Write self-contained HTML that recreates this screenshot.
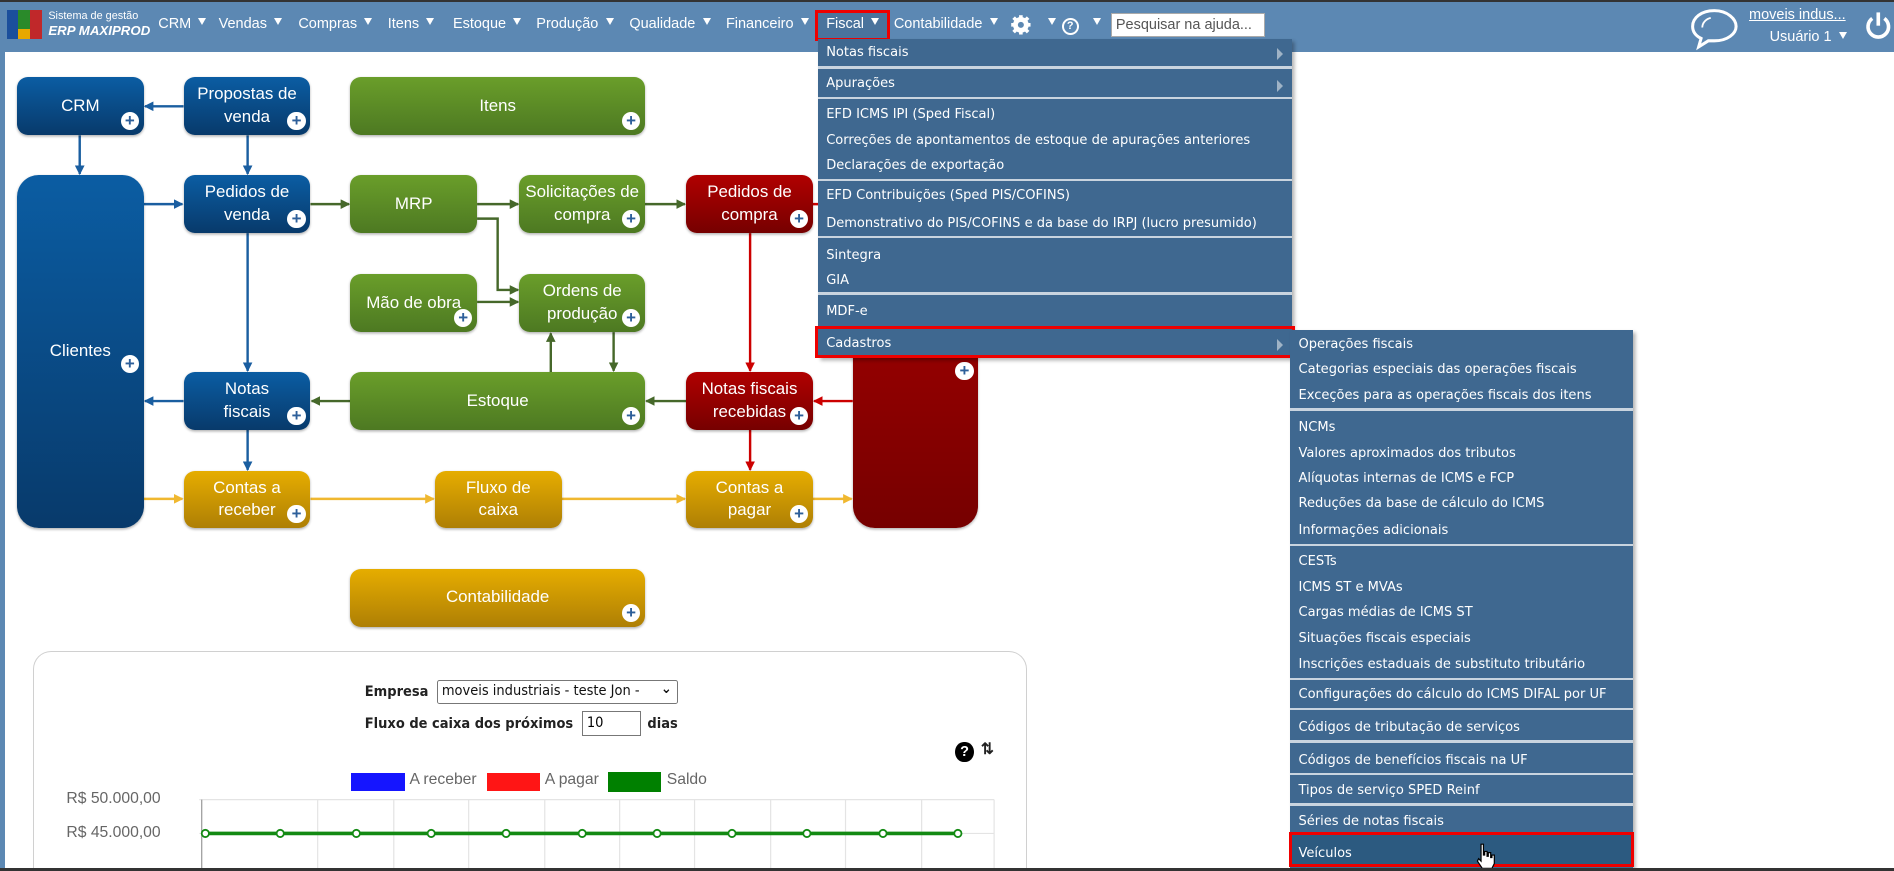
<!DOCTYPE html>
<html><head><meta charset="utf-8">
<style>
html{zoom:1.2079}
*{box-sizing:border-box}
body{margin:0;width:1568px;height:721px;overflow:hidden;background:#fff;font-family:"Liberation Sans",Arial,sans-serif;position:relative}
.abs{position:absolute}
#nav{left:0;top:0;width:1568px;height:43px;background:#5c88b3;border-top:2px solid #333}
#lstrip{left:0;top:43px;width:4px;height:678px;background:#5c88b3}
.ni{position:absolute;top:13px;color:#fff;font-size:12px;white-space:nowrap}
.tri{display:inline-block;width:0;height:0;border-left:4px solid transparent;border-right:4px solid transparent;border-top:6px solid #fff;margin-left:6px;vertical-align:2px}
.menu{position:absolute;background:#3f6890;box-shadow:2px 2px 3px rgba(0,0,0,.3);font-family:"DejaVu Sans",Verdana,sans-serif;font-size:10.8px;color:#fff}
.mi{position:absolute;left:7px;white-space:nowrap;margin-top:2px}
.sep{position:absolute;left:0;right:0;height:2px;background:#c9d4df}
.arr{position:absolute;right:8px;width:0;height:0;border-top:5px solid transparent;border-bottom:5px solid transparent;border-left:5px solid #9fb3c6;margin-top:2px}
.box{position:absolute;border-radius:9px;color:#fff;font-size:14px;text-align:center;display:flex;align-items:center;justify-content:center;line-height:19px;box-shadow:0 1px 2px rgba(0,0,0,.3)}
.b{background:linear-gradient(#0b5da3,#083a6b)}
.g{background:linear-gradient(#6a9e2a,#4d7922)}
.r{background:linear-gradient(#b10000,#760000)}
.y{background:linear-gradient(#e6ad00,#ae7f05)}
.pl{position:absolute;right:4px;bottom:4px;width:15px;height:15px;border-radius:50%;background:#fff;color:#2d5f9a;font-size:14px;line-height:15px;text-align:center;font-weight:bold}
.lbl{position:absolute;font-size:12px;color:#222;font-weight:bold;font-family:"DejaVu Sans Condensed","DejaVu Sans",sans-serif}
</style></head><body>
<div id="nav" class="abs"></div>
<div id="lstrip" class="abs"></div>
<div class="abs" style="left:6px;top:8px;width:9px;height:24px;background:#1b4f9c"></div>
<div class="abs" style="left:15px;top:8px;width:10px;height:16px;background:#2a8a2a"></div>
<div class="abs" style="left:15px;top:24px;width:10px;height:8px;background:#e8a800"></div>
<div class="abs" style="left:25px;top:8px;width:10px;height:24px;background:#c0282a"></div>
<div class="abs" style="left:40px;top:8px;color:#fff;font-size:9px">Sistema de gestão</div>
<div class="abs" style="left:40px;top:19px;color:#fff;font-size:11px;font-weight:bold;font-style:italic">ERP MAXIPROD</div>
<div class="ni" style="left:131px">CRM<span class="tri"></span></div>
<div class="ni" style="left:181px">Vendas<span class="tri"></span></div>
<div class="ni" style="left:247px">Compras<span class="tri"></span></div>
<div class="ni" style="left:321px">Itens<span class="tri"></span></div>
<div class="ni" style="left:375px">Estoque<span class="tri"></span></div>
<div class="ni" style="left:444px">Produção<span class="tri"></span></div>
<div class="ni" style="left:521px">Qualidade<span class="tri"></span></div>
<div class="ni" style="left:601px">Financeiro<span class="tri"></span></div>
<div class="abs" style="left:675px;top:8px;width:62px;height:26px;border:3px solid #e00;background:#4a739c"></div>
<div class="ni" style="left:684px">Fiscal<span class="tri"></span></div>
<div class="ni" style="left:740px">Contabilidade<span class="tri"></span></div>
<svg class="abs" style="left:836px;top:12px" width="18" height="18" viewBox="0 0 18 18"><circle cx="9" cy="9" r="5" fill="none" stroke="#fff" stroke-width="3"/><g stroke="#fff" stroke-width="3"><line x1="9" y1="1" x2="9" y2="17"/><line x1="1" y1="9" x2="17" y2="9"/><line x1="3" y1="3" x2="15" y2="15"/><line x1="15" y1="3" x2="3" y2="15"/></g><circle cx="9" cy="9" r="2.5" fill="#5c88b3"/></svg>
<div class="ni" style="left:862px;top:13px"><span class="tri"></span></div>
<div class="abs" style="left:879px;top:15px;width:14px;height:14px;border:2px solid #fff;border-radius:50%;color:#fff;font-size:9px;text-align:center;line-height:10px;font-weight:bold">?</div>
<div class="ni" style="left:899px;top:13px"><span class="tri"></span></div>
<div class="abs" style="left:920px;top:11px;width:127px;height:20px;background:#fff;border:1px solid #aaa;font-size:12px;color:#555;padding:2px 3px;white-space:nowrap;overflow:hidden">Pesquisar na ajuda...</div>
<svg class="abs" style="left:1398px;top:6px" width="42" height="36" viewBox="0 0 42 36"><path d="M21 3C10 3 3 9 3 16c0 5 3 8 7 10l-2 7 8-5c2 0 3 0 5 0 11 0 18-6 18-12S32 3 21 3z" fill="none" stroke="#fff" stroke-width="2.5"/><path d="M11 17c0-4 3-7 7-8" fill="none" stroke="#fff" stroke-width="1.5"/></svg>
<div class="abs" style="left:1448px;top:6px;color:#fff;font-size:12px;text-decoration:underline">moveis indus...</div>
<div class="abs" style="left:1465px;top:24px;color:#fff;font-size:12px">Usuário 1<span class="tri"></span></div>
<svg class="abs" style="left:1544px;top:8px" width="22" height="26" viewBox="0 0 22 26"><path d="M6 7A8.5 8.5 0 1 0 16 7" fill="none" stroke="#fff" stroke-width="3"/><line x1="11" y1="2" x2="11" y2="13" stroke="#fff" stroke-width="3"/></svg>

<svg class="abs" style="left:0;top:0" width="900" height="540">
<defs>
<marker id="mb" markerWidth="8" markerHeight="8" refX="7" refY="4" orient="auto" markerUnits="userSpaceOnUse"><path d="M0 0L8 4L0 8z" fill="#1a5ea0"/></marker>
<marker id="mg" markerWidth="8" markerHeight="8" refX="7" refY="4" orient="auto" markerUnits="userSpaceOnUse"><path d="M0 0L8 4L0 8z" fill="#46682a"/></marker>
<marker id="mr" markerWidth="8" markerHeight="8" refX="7" refY="4" orient="auto" markerUnits="userSpaceOnUse"><path d="M0 0L8 4L0 8z" fill="#c00"/></marker>
<marker id="my" markerWidth="8" markerHeight="8" refX="7" refY="4" orient="auto" markerUnits="userSpaceOnUse"><path d="M0 0L8 4L0 8z" fill="#f0b830"/></marker>
</defs>
<g stroke-width="2" fill="none">
<g stroke="#1a5ea0" marker-end="url(#mb)">
<line x1="152" y1="88" x2="120" y2="88"/><line x1="66" y1="112" x2="66" y2="144"/><line x1="205" y1="112" x2="205" y2="144"/>
<line x1="119" y1="169" x2="151" y2="169"/><line x1="205" y1="193" x2="205" y2="307"/><line x1="152" y1="332" x2="120" y2="332"/><line x1="205" y1="356" x2="205" y2="389"/>
</g>
<g stroke="#46682a" marker-end="url(#mg)">
<line x1="257" y1="169" x2="289" y2="169"/><line x1="395" y1="169" x2="429" y2="169"/><line x1="534" y1="169" x2="567" y2="169"/>
<polyline points="395,181 412,181 412,240 429,240"/><line x1="395" y1="250" x2="429" y2="250"/>
<line x1="456" y1="308" x2="456" y2="276"/><line x1="508" y1="275" x2="508" y2="307"/>
<line x1="290" y1="332" x2="258" y2="332"/><line x1="568" y1="332" x2="535" y2="332"/>
</g>
<g stroke="#c00" marker-end="url(#mr)">
<line x1="673" y1="169" x2="705" y2="169"/><line x1="621" y1="193" x2="621" y2="307"/><line x1="706" y1="332" x2="674" y2="332"/><line x1="621" y1="356" x2="621" y2="389"/>
</g>
<g stroke="#f0b830" marker-end="url(#my)">
<line x1="119" y1="413" x2="151" y2="413"/><line x1="257" y1="413" x2="359" y2="413"/><line x1="465" y1="413" x2="567" y2="413"/><line x1="673" y1="413" x2="705" y2="413"/>
</g>
</g>
</svg>

<div class="box b" style="left:14px;top:64px;width:105px;height:48px">CRM<div class="pl">+</div></div>
<div class="box b" style="left:152px;top:64px;width:105px;height:48px">Propostas de<br>venda<div class="pl">+</div></div>
<div class="box g" style="left:290px;top:64px;width:244px;height:48px">Itens<div class="pl">+</div></div>
<div class="box b" style="left:14px;top:145px;width:105px;height:292px;border-radius:18px">Clientes<div class="pl" style="bottom:128px">+</div></div>
<div class="box b" style="left:152px;top:145px;width:105px;height:48px">Pedidos de<br>venda<div class="pl">+</div></div>
<div class="box g" style="left:290px;top:145px;width:105px;height:48px">MRP</div>
<div class="box g" style="left:430px;top:145px;width:104px;height:48px">Solicitações de<br>compra<div class="pl">+</div></div>
<div class="box r" style="left:568px;top:145px;width:105px;height:48px">Pedidos de<br>compra<div class="pl">+</div></div>
<div class="box r" style="left:706px;top:145px;width:104px;height:292px;border-radius:18px">Fornecedores<div class="pl" style="bottom:122px">+</div></div>
<div class="box g" style="left:290px;top:227px;width:105px;height:48px">Mão de obra<div class="pl">+</div></div>
<div class="box g" style="left:430px;top:227px;width:104px;height:48px">Ordens de<br>produção<div class="pl">+</div></div>
<div class="box b" style="left:152px;top:308px;width:105px;height:48px">Notas<br>fiscais<div class="pl">+</div></div>
<div class="box g" style="left:290px;top:308px;width:244px;height:48px">Estoque<div class="pl">+</div></div>
<div class="box r" style="left:568px;top:308px;width:105px;height:48px">Notas fiscais<br>recebidas<div class="pl">+</div></div>
<div class="box y" style="left:152px;top:390px;width:105px;height:47px">Contas a<br>receber<div class="pl">+</div></div>
<div class="box y" style="left:360px;top:390px;width:105px;height:47px">Fluxo de<br>caixa</div>
<div class="box y" style="left:568px;top:390px;width:105px;height:47px">Contas a<br>pagar<div class="pl">+</div></div>
<div class="box y" style="left:290px;top:471px;width:244px;height:48px">Contabilidade<div class="pl">+</div></div>

<div class="abs" style="left:27px;top:539px;width:823px;height:182px;border:1px solid #d0d0d0;border-bottom:none;border-radius:15px 15px 0 0"></div>
<div class="lbl" style="left:302px;top:566px">Empresa</div>
<div class="abs" style="left:362px;top:563px;width:199px;height:20px;border:1px solid #777;border-radius:2px;font-size:12px;padding:2px 3px;font-family:'DejaVu Sans Condensed','DejaVu Sans',sans-serif;color:#111;white-space:nowrap">moveis industriais - teste Jon -<span style="position:absolute;right:4px;top:0;font-weight:bold">⌄</span></div>
<div class="lbl" style="left:302px;top:593px">Fluxo de caixa dos próximos</div>
<div class="abs" style="left:482px;top:589px;width:49px;height:20px;border:1px solid #777;font-size:12px;padding:2px 3px;font-family:'DejaVu Sans Condensed','DejaVu Sans',sans-serif">10</div>
<div class="lbl" style="left:536px;top:593px">dias</div>
<div class="abs" style="left:791px;top:614px;width:15px;height:17px;border-radius:50%;background:#000;color:#fff;font-size:12px;font-weight:bold;text-align:center;line-height:17px">?</div>
<div class="abs" style="left:812px;top:612px;font-size:13px;font-weight:bold;color:#222">⇅</div>
<div class="abs" style="left:291px;top:640px;width:44px;height:15px;background:#1515ff"></div>
<div class="abs" style="left:339px;top:638px;font-size:13px;color:#666">A receber</div>
<div class="abs" style="left:403px;top:640px;width:44px;height:15px;background:#ff1515"></div>
<div class="abs" style="left:451px;top:638px;font-size:13px;color:#666">A pagar</div>
<div class="abs" style="left:503px;top:639px;width:44px;height:17px;background:#008000"></div>
<div class="abs" style="left:552px;top:638px;font-size:13px;color:#666">Saldo</div>
<div class="abs" style="left:55px;top:654px;font-size:13px;color:#666">R$ 50.000,00</div>
<div class="abs" style="left:55px;top:682px;font-size:13px;color:#666">R$ 45.000,00</div>
<svg class="abs" style="left:0;top:0" width="900" height="721">
<g stroke="#e4e4e4" stroke-width="1">
<line x1="165" y1="662" x2="823" y2="662"/><line x1="165" y1="690" x2="823" y2="690"/>
<line x1="263" y1="662" x2="263" y2="721"/><line x1="326" y1="662" x2="326" y2="721"/><line x1="388" y1="662" x2="388" y2="721"/><line x1="451" y1="662" x2="451" y2="721"/><line x1="513" y1="662" x2="513" y2="721"/><line x1="575" y1="662" x2="575" y2="721"/><line x1="638" y1="662" x2="638" y2="721"/><line x1="700" y1="662" x2="700" y2="721"/><line x1="763" y1="662" x2="763" y2="721"/><line x1="823" y1="662" x2="823" y2="721"/>
</g>
<line x1="167" y1="662" x2="167" y2="721" stroke="#999"/>
<line x1="170" y1="690" x2="793" y2="690" stroke="#138a13" stroke-width="3"/>
<g fill="#fff" stroke="#138a13" stroke-width="1.5">
<circle cx="170" cy="690" r="3"/><circle cx="232" cy="690" r="3"/><circle cx="295" cy="690" r="3"/><circle cx="357" cy="690" r="3"/><circle cx="419" cy="690" r="3"/><circle cx="482" cy="690" r="3"/><circle cx="544" cy="690" r="3"/><circle cx="606" cy="690" r="3"/><circle cx="668" cy="690" r="3"/><circle cx="731" cy="690" r="3"/><circle cx="793" cy="690" r="3"/>
</g>
</svg>

<div class="menu" style="left:677px;top:32px;width:393px;height:264px">
<div class="mi" style="top:3px">Notas fiscais</div><div class="arr" style="top:6px"></div>
<div class="sep" style="top:23px"></div>
<div class="mi" style="top:29px">Apurações</div><div class="arr" style="top:32px"></div>
<div class="sep" style="top:48px"></div>
<div class="mi" style="top:55px">EFD ICMS IPI (Sped Fiscal)</div>
<div class="mi" style="top:76px">Correções de apontamentos de estoque de apurações anteriores</div>
<div class="mi" style="top:97px">Declarações de exportação</div>
<div class="sep" style="top:116px"></div>
<div class="mi" style="top:122px">EFD Contribuições (Sped PIS/COFINS)</div>
<div class="mi" style="top:145px">Demonstrativo do PIS/COFINS e da base do IRPJ (lucro presumido)</div>
<div class="sep" style="top:163px"></div>
<div class="mi" style="top:171px">Sintegra</div>
<div class="mi" style="top:192px">GIA</div>
<div class="sep" style="top:210px"></div>
<div class="mi" style="top:218px">MDF-e</div>
<div class="mi" style="top:244px">Cadastros</div><div class="arr" style="top:247px"></div>
</div>
<div class="abs" style="left:675px;top:270px;width:397px;height:26px;border:3px solid #e00"></div>

<div class="menu" style="left:1068px;top:273px;width:284px;height:446px">
<div class="mi" style="top:4px">Operações fiscais</div>
<div class="mi" style="top:25px">Categorias especiais das operações fiscais</div>
<div class="mi" style="top:46px">Exceções para as operações fiscais dos itens</div>
<div class="sep" style="top:65px"></div>
<div class="mi" style="top:73px">NCMs</div>
<div class="mi" style="top:94px">Valores aproximados dos tributos</div>
<div class="mi" style="top:115px">Alíquotas internas de ICMS e FCP</div>
<div class="mi" style="top:136px">Reduções da base de cálculo do ICMS</div>
<div class="mi" style="top:158px">Informações adicionais</div>
<div class="sep" style="top:177px"></div>
<div class="mi" style="top:184px">CESTs</div>
<div class="mi" style="top:205px">ICMS ST e MVAs</div>
<div class="mi" style="top:226px">Cargas médias de ICMS ST</div>
<div class="mi" style="top:247px">Situações fiscais especiais</div>
<div class="mi" style="top:269px">Inscrições estaduais de substituto tributário</div>
<div class="sep" style="top:288px"></div>
<div class="mi" style="top:294px">Configurações do cálculo do ICMS DIFAL por UF</div>
<div class="sep" style="top:313px"></div>
<div class="mi" style="top:321px">Códigos de tributação de serviços</div>
<div class="sep" style="top:340px"></div>
<div class="mi" style="top:348px">Códigos de benefícios fiscais na UF</div>
<div class="sep" style="top:367px"></div>
<div class="mi" style="top:373px">Tipos de serviço SPED Reinf</div>
<div class="sep" style="top:392px"></div>
<div class="mi" style="top:399px">Séries de notas fiscais</div>
<div class="abs" style="left:0;top:417px;width:284px;height:28px;background:#2c5a80"></div>
<div class="mi" style="top:425px">Veículos</div>
</div>
<div class="abs" style="left:1067px;top:689px;width:286px;height:29px;border:3px solid #e00"></div>
<svg class="abs" style="left:1221px;top:698px" width="18" height="22" viewBox="0 0 18 22"><path d="M5 1h2v9h1V7h2v4h1V8h2v4h1V10h2v7l-2 4H6L2 15l1-2 2 2z" fill="#fff" stroke="#000" stroke-width="1"/></svg>
<div class="abs" style="left:0;top:719px;width:1568px;height:2px;background:#333"></div>
</body></html>
